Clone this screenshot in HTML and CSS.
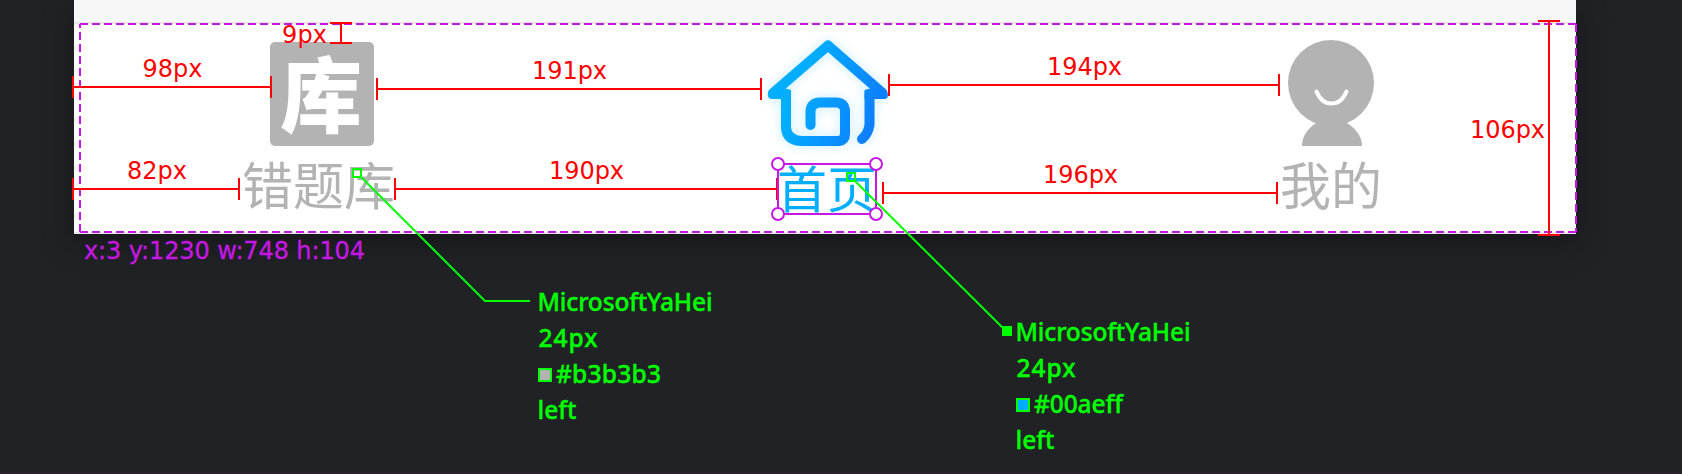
FILE: index.html
```html
<!DOCTYPE html>
<html lang="zh-CN">
<head>
<meta charset="utf-8">
<title>Tab bar spec</title>
<link rel="stylesheet" href="styles.css">
</head>
<body>
<main class="canvas">
  <section class="artboard">
    <div class="content-edge"></div>
    <nav class="tabbar">
      <a class="tab tab-library">
        <span class="library-icon"><span class="library-glyph">库</span></span>
        <span class="tab-label">错题库</span>
      </a>
      <a class="tab tab-home">
        <svg class="home-icon" width="124" height="110" viewBox="0 0 124 110">
          <defs>
            <linearGradient id="blue" gradientUnits="userSpaceOnUse" x1="20" y1="30" x2="112" y2="66">
              <stop offset=".2" stop-color="#00aeff"/><stop offset="1" stop-color="#0e80ff"/>
            </linearGradient>
          </defs>
          <g fill="none" stroke="url(#blue)" stroke-width="10" stroke-linecap="round" stroke-linejoin="round">
            <path d="M7 55 L62 7.500 L116.500 55"/>
            <path d="M20 56 V90 Q21 102 35 103 H73 Q79 102 79 96 V72 Q78 65 71 64.500 H54 Q45 65 44.500 73 V87"/>
            <path d="M103.500 56 V87 Q102 96 96 101"/>
          </g>
          <path fill="url(#blue)" d="M2 55 L10 48 L25 52 V61 H5 Q1 60 2 55Z M121.500 55 L114 48 L98.500 52 V61 H119 Q123 60 121.500 55Z"/>
        </svg>
        <span class="tab-label tab-label-active">首页</span>
      </a>
      <a class="tab tab-mine">
        <svg class="mine-icon" width="86" height="106" viewBox="0 0 86 106">
          <circle cx="43" cy="43" r="43" fill="#b3b3b3"/>
          <path d="M14 106 C14 95 21 87 30 82 H57 C67 87 74 96 74 106Z" fill="#b3b3b3"/>
          <path d="M28.500 51.500 C35 67.500 52 67.500 58.500 51.500" fill="none" stroke="#fff" stroke-width="4" stroke-linecap="round"/>
        </svg>
        <span class="tab-label">我的</span>
      </a>
    </nav>
  </section>

  <svg class="annotations" width="1682" height="474" viewBox="0 0 1682 474">
    <g class="bounds">
      <path d="M80 24 H1576"/><path d="M80 232 V24"/><path d="M80 232 H1576"/><path d="M1576 24 V232"/>
    </g>
    <g class="measure">
      <path d="M73 87 H271 M73 76 V98 M271 76 V98"/>
      <path d="M73 189 H239 M73 178 V200 M239 178 V200"/>
      <path d="M341 23 V43 M330 23 H352 M330 43 H352"/>
      <path d="M377 89 H761 M377 78 V100 M761 78 V100"/>
      <path d="M395 189 H777 M395 178 V200 M777 178 V200"/>
      <path d="M889 85 H1279 M889 74 V96 M1279 74 V96"/>
      <path d="M883 193 H1277 M883 182 V204 M1277 182 V204"/>
      <path d="M1549 21 V235 M1538 21 H1560 M1538 235 H1560"/>
    </g>
    <g class="measure-text">
      <text x="142.500" y="77" textLength="60">98px</text>
      <text x="127" y="179" textLength="60">82px</text>
      <text x="282" y="43" textLength="45">9px</text>
      <text x="532" y="79" textLength="75">191px</text>
      <text x="549" y="179" textLength="75">190px</text>
      <text x="1047" y="75" textLength="75">194px</text>
      <text x="1043" y="183" textLength="75">196px</text>
      <text x="1470" y="138" textLength="75">106px</text>
    </g>
    <text class="bounds-text" x="84" y="259" textLength="281">x:3 y:1230 w:748 h:104</text>
    <g class="selection">
      <rect x="778" y="164" width="98" height="50"/>
      <circle cx="778" cy="164" r="6"/><circle cx="876" cy="164" r="6"/>
      <circle cx="778" cy="214" r="6"/><circle cx="876" cy="214" r="6"/>
    </g>
    <g class="leader">
      <rect x="353" y="169" width="8" height="8"/>
      <path d="M361 177 L485 301 H530"/>
      <rect x="847" y="173" width="8" height="8"/>
      <path d="M855 181 L1004 329"/>
      <rect class="leader-end" x="1003" y="327" width="8" height="8"/>
      <rect x="539" y="369" width="12" height="12" fill="#b3b3b3"/>
      <rect x="1017" y="399" width="12" height="12" fill="#00aeff"/>
    </g>
    <g class="note">
      <text x="537.500" y="311" textLength="175">MicrosoftYaHei</text>
      <text x="538.500" y="347" textLength="59">24px</text>
      <text x="556" y="383" textLength="105">#b3b3b3</text>
      <text x="537.500" y="419" textLength="39">left</text>
      <text x="1015.500" y="341" textLength="175">MicrosoftYaHei</text>
      <text x="1016.500" y="377" textLength="59">24px</text>
      <text x="1034" y="413" textLength="89">#00aeff</text>
      <text x="1015.500" y="449" textLength="39">left</text>
    </g>
  </svg>
</main>
</body>
</html>
```
FILE: styles.css
```css
body { margin: 0; }
.canvas {
  position: relative;
  box-sizing: border-box;
  width: 1682px;
  height: 474px;
  padding-left: 74px;
  overflow: hidden;
  background: #212226;
  border-bottom: 2px solid #271f29;
}
.artboard {
  width: 1502px;
  height: 234px;
  background: #fff;
  box-shadow: 0 8px 28px rgba(0, 0, 0, .36);
}
.content-edge {
  box-sizing: border-box;
  height: 24px;
  background: #f7f7f7;
  border-bottom: 2px solid #e6e6e6;
}
.tabbar {
  display: flex;
  box-sizing: border-box;
  height: 210px;
  padding: 16px 0 0 168px;
  border-bottom: 2px solid #e9e9e9;
}
.tab {
  display: flex;
  flex-direction: column;
  align-items: center;
}
.tab-home { width: 124px; margin: -2px 0 0 371px; }
.tab-mine { margin-left: 390px; }
.library-icon {
  display: flex;
  width: 104px;
  height: 104px;
  margin: 2px 0 0 6px;
  align-items: center;
  justify-content: center;
  border-radius: 5px;
  background: #b3b3b3;
}
.library-glyph {
  margin: -7px 0 0 -1px;
  font: 900 82px/104px "Noto Sans CJK SC", sans-serif;
  color: #fff;
}
.home-icon { filter: drop-shadow(0 0 6px rgba(0, 174, 255, .22)); }
.tab-label {
  margin-top: 10px;
  font: 400 51px/54px "Noto Sans CJK SC", sans-serif;
  color: #b3b3b3;
}
.tab-label-active {
  margin: 11px 2px 0 0;
  font-size: 50px;
  color: #00aeff;
}
.annotations { position: absolute; inset: 0; }
.bounds { fill: none; stroke: #c617e4; stroke-width: 2; stroke-dasharray: 8 4; }
.measure { fill: none; stroke: #f00; stroke-width: 2; }
.measure-text { font: 24px "DejaVu Sans", sans-serif; fill: #f00; }
.bounds-text { font: 24px "DejaVu Sans", sans-serif; fill: #c617e4; stroke: #c617e4; stroke-width: .3; }
.selection { fill: none; stroke: #c617e4; stroke-width: 2; }
.selection circle { fill: #fff; }
.leader { stroke: #0f0; stroke-width: 2; }
.leader path { fill: none; }
.leader rect:not([fill]) { fill: none; }
.leader .leader-end:not([fill]) { fill: #0f0; }
.note { font: 500 24.5px "Noto Sans", sans-serif; fill: #0f0; stroke: #0f0; stroke-width: .4; }
```
